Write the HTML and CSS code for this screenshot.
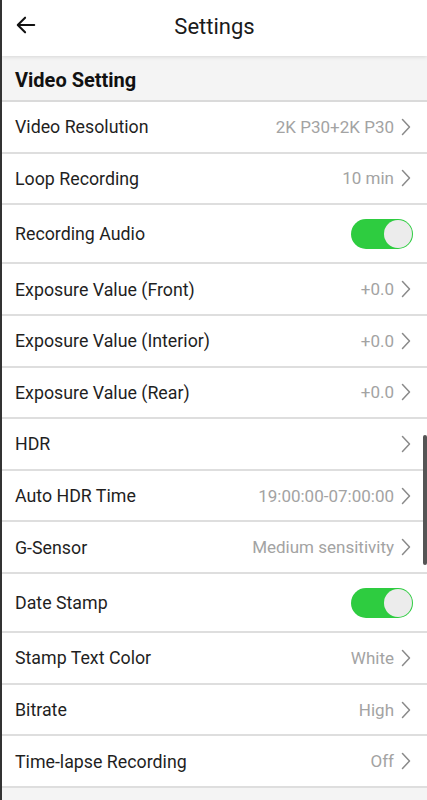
FILE: index.html
```html
<!DOCTYPE html>
<html lang="en">
<head>
  <meta charset="UTF-8" />
  <meta name="viewport" content="width=device-width, initial-scale=1.0" />
  <title>Settings</title>
  <link rel="stylesheet" href="styles.css">
</head>
<body>
  <div class="screen">
    <header class="topbar">
      <svg class="back" width="22" height="22" viewBox="0 0 24 24">
        <path d="M21 12H4M11 4l-8 8 8 8" fill="none" stroke="#111" stroke-width="2.2" stroke-linecap="round" stroke-linejoin="round"/>
      </svg>
      <h1>Settings</h1>
    </header>

    <div class="section">Video Setting</div>

    <div class="row"><span class="label">Video Resolution</span><span class="value">2K P30+2K P30<svg class="chev" viewBox="0 0 10 18"><polyline points="1.5,1.5 8.5,9 1.5,16.5"/></svg></span></div>
    <div class="row"><span class="label">Loop Recording</span><span class="value">10 min<svg class="chev" viewBox="0 0 10 18"><polyline points="1.5,1.5 8.5,9 1.5,16.5"/></svg></span></div>
    <div class="row tall"><span class="label">Recording Audio</span><span class="toggle"><span class="knob"></span></span></div>
    <div class="row"><span class="label">Exposure Value (Front)</span><span class="value">+0.0<svg class="chev" viewBox="0 0 10 18"><polyline points="1.5,1.5 8.5,9 1.5,16.5"/></svg></span></div>
    <div class="row"><span class="label">Exposure Value (Interior)</span><span class="value">+0.0<svg class="chev" viewBox="0 0 10 18"><polyline points="1.5,1.5 8.5,9 1.5,16.5"/></svg></span></div>
    <div class="row"><span class="label">Exposure Value (Rear)</span><span class="value">+0.0<svg class="chev" viewBox="0 0 10 18"><polyline points="1.5,1.5 8.5,9 1.5,16.5"/></svg></span></div>
    <div class="row"><span class="label">HDR</span><span class="value"><svg class="chev" viewBox="0 0 10 18"><polyline points="1.5,1.5 8.5,9 1.5,16.5"/></svg></span></div>
    <div class="row"><span class="label">Auto HDR Time</span><span class="value">19:00:00-07:00:00<svg class="chev" viewBox="0 0 10 18"><polyline points="1.5,1.5 8.5,9 1.5,16.5"/></svg></span></div>
    <div class="row"><span class="label">G-Sensor</span><span class="value">Medium sensitivity<svg class="chev" viewBox="0 0 10 18"><polyline points="1.5,1.5 8.5,9 1.5,16.5"/></svg></span></div>
    <div class="row tall"><span class="label">Date Stamp</span><span class="toggle"><span class="knob"></span></span></div>
    <div class="row"><span class="label">Stamp Text Color</span><span class="value">White<svg class="chev" viewBox="0 0 10 18"><polyline points="1.5,1.5 8.5,9 1.5,16.5"/></svg></span></div>
    <div class="row"><span class="label">Bitrate</span><span class="value">High<svg class="chev" viewBox="0 0 10 18"><polyline points="1.5,1.5 8.5,9 1.5,16.5"/></svg></span></div>
    <div class="row"><span class="label">Time-lapse Recording</span><span class="value">Off<svg class="chev" viewBox="0 0 10 18"><polyline points="1.5,1.5 8.5,9 1.5,16.5"/></svg></span></div>

    <div class="scrollbar"></div>
  </div>
</body>
</html>
```

FILE: styles.css
```css
body {
  margin: 0;
  font-family: Roboto, "Noto Sans", sans-serif;
  color: #1f1f1f;
  background: #f4f4f4;
}

.screen {
  position: relative;
  height: 800px;
  border-left: 2px solid #333;
  background: #f4f4f4;
  overflow: hidden;
}

.topbar {
  position: relative;
  height: 56px;
  background: #fff;
  display: flex;
  align-items: center;
  justify-content: center;
  box-shadow: 0 1px 4px rgba(0, 0, 0, 0.12);
  z-index: 1;
}

.topbar h1 {
  margin: 0 0 4px;
  font-size: 22px;
  font-weight: 400;
  color: #1a1a1a;
}

.back {
  position: absolute;
  left: 13px;
  top: 14px;
}

.section {
  height: 46px;
  padding: 3px 13px 0;
  box-sizing: border-box;
  display: flex;
  align-items: center;
  font-size: 20px;
  font-weight: 700;
  color: #111;
  background: #f4f4f4;
  border-bottom: 2px solid #dadada;
}

.row {
  height: 49.6px;
  padding: 0 14px 0 13px;
  background: #fff;
  display: flex;
  align-items: center;
  justify-content: space-between;
  border-bottom: 2px solid #dedede;
  font-size: 17.8px;
}

.row.tall {
  height: 57.2px;
}

.value {
  display: flex;
  align-items: center;
  color: #a3a3a3;
  font-size: 17px;
}

.chev {
  width: 10px;
  height: 18px;
  margin: 0 2px 0 7px;
  fill: none;
  stroke: #8a8a8a;
  stroke-width: 1.5;
  stroke-linecap: round;
  stroke-linejoin: round;
}

.toggle {
  width: 62px;
  height: 30px;
  border-radius: 15px;
  background: #2ecc40;
  display: flex;
  align-items: center;
  justify-content: flex-end;
  padding: 0 1px;
  box-sizing: border-box;
}

.knob {
  width: 28px;
  height: 28px;
  border-radius: 50%;
  background: #ececec;
}

.scrollbar {
  position: absolute;
  right: 0;
  top: 435px;
  width: 4px;
  height: 130px;
  background: #555;
  border-radius: 2px;
}
```
